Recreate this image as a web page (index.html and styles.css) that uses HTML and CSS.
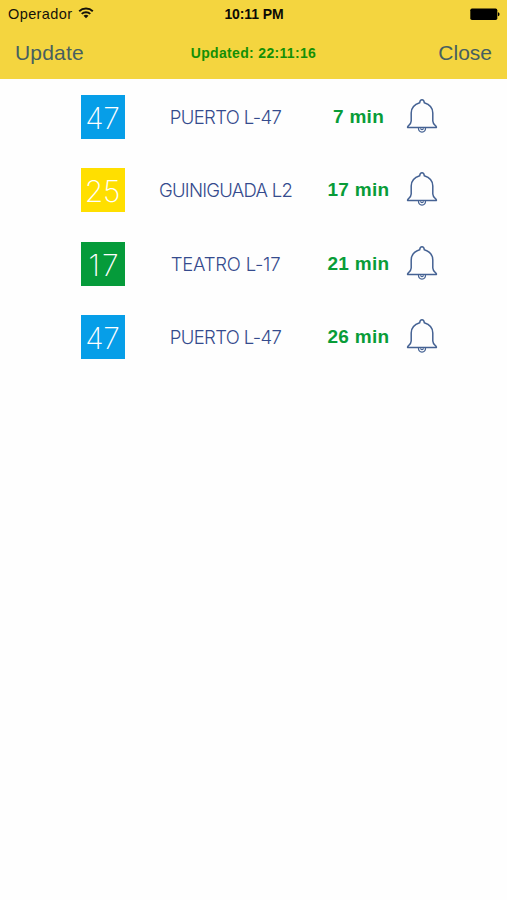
FILE: index.html
```html
<!DOCTYPE html>
<html lang="en">
<head>
<meta charset="utf-8">
<title>Arrivals</title>
<link rel="stylesheet" href="styles.css">
</head>
<body>
<svg class="defs" width="0" height="0" aria-hidden="true">
  <symbol id="bell" viewBox="0 0 32 36">
    <path d="M13.700 4.800C13.900 2.700 14.800 1.700 16 1.700s2.100 1 2.300 3.100c5.600 1.800 8.500 4.900 8.500 10.200v8c0 2.400 1.300 3.400 3.300 5.400.5.600.5 1.200-.4 1.200H2.300c-.9 0-.9-.6-.4-1.200 2-2 3.300-3 3.300-5.400v-8c0-5.300 2.900-8.400 8.500-10.200z"/>
    <path d="M12.400 29.600c0 2.900 1.400 4.500 3.600 4.500s3.600-1.600 3.600-4.500M14.600 30.200c.1 1.100.6 1.500 1.400 1.500s1.300-.4 1.400-1.500" stroke-width="1.200"/>
  </symbol>
</svg>
<header class="header">
  <div class="status">
    <div class="carrier"><span class="operator">Operador</span>
      <svg class="wifi" width="16" height="12" viewBox="0 0 16 12"><path d="M1.200 4.300a9.800 9.800 0 0 1 13.600 0M3.700 6.900a6.300 6.300 0 0 1 8.600 0" fill="none" stroke="#15130a" stroke-width="1.900"/><path d="M5.500 8.800a3.700 3.700 0 0 1 5 0L8 11.300z" fill="#15130a"/></svg>
    </div>
    <span class="clock">10:11 PM</span>
    <svg class="battery" width="31" height="13" viewBox="0 0 31 13"><rect x="1.300" y=".5" width="27" height="11.500" rx="1.700"/><path d="M28.900 4.300c1.200.3 1.600 1 1.600 2s-.4 1.700-1.600 2z"/></svg>
  </div>
  <nav class="bar">
    <span class="action update">Update</span>
    <span class="updated">Updated: 22:11:16</span>
    <span class="action close">Close</span>
  </nav>
</header>
<main class="list">
  <div class="row"><span class="badge blue">47</span><span class="name puerto">PUERTO L-47</span><span class="time">7 min</span><svg class="bell"><use href="#bell"/></svg></div>
  <div class="row"><span class="badge yellow">25</span><span class="name guiniguada">GUINIGUADA L2</span><span class="time">17 min</span><svg class="bell"><use href="#bell"/></svg></div>
  <div class="row"><span class="badge green">17</span><span class="name teatro">TEATRO L-17</span><span class="time">21 min</span><svg class="bell"><use href="#bell"/></svg></div>
  <div class="row"><span class="badge blue">47</span><span class="name puerto">PUERTO L-47</span><span class="time">26 min</span><svg class="bell"><use href="#bell"/></svg></div>
</main>
</body>
</html>
```
FILE: styles.css
```css
* { box-sizing: border-box; }
body {
  margin: 0;
  min-height: 900px;
  background: #fefefe;
  font-family: "Liberation Sans", Arial, sans-serif;
}
.defs { display: block; }
.header { height: 79px; background: #f4d53f; }
.status, .bar {
  display: grid;
  grid-template-columns: 1fr auto 1fr;
  align-items: center;
}
.status { height: 28px; padding: 0 7px 0 8px; color: #15130a; }
.carrier { display: flex; align-items: center; gap: 6px; font-size: 14.500px; letter-spacing: .4px; }
.wifi { margin-top: -3px; }
.clock { font-size: 14px; font-weight: bold; letter-spacing: -.1px; color: #0b0a05; }
.battery { justify-self: end; fill: #000; }
.bar { height: 50px; padding: 0 15px; }
.action { font-size: 21px; color: #475f60; }
.update { letter-spacing: .2px; }
.close { justify-self: end; }
.updated { font-size: 14px; font-weight: bold; letter-spacing: .33px; color: #149005; }
.list { padding-top: 16px; }
.row {
  display: grid;
  grid-template-columns: 44px 202px 64px 33px;
  align-items: center;
  height: 44px;
  margin: 0 0 29.300px 80.500px;
}
.badge {
  height: 44px;
  line-height: 46px;
  text-align: center;
  font-family: Inter, sans-serif;
  font-weight: 200;
  font-size: 30px;
  letter-spacing: -.3px;
  color: #fff;
}
.blue { background: #069ee8; }
.yellow { background: #ffdf00; }
.green { background: #059b3a; letter-spacing: 2px; padding-left: 4px; }
.name {
  text-align: center;
  font-family: Inter, sans-serif;
  font-weight: 300;
  font-size: 18.500px;
  letter-spacing: -.75px;
  white-space: nowrap;
  color: #354b8d;
}
.puerto { letter-spacing: -.6px; }
.teatro { letter-spacing: -.2px; }
.time { text-align: center; font-size: 19px; font-weight: bold; letter-spacing: .3px; color: #089c38; white-space: nowrap; }
.bell { width: 32px; height: 36px; margin: -2px 0 0 15.500px; fill: none; stroke: #456293; stroke-width: 1.500; }
```
